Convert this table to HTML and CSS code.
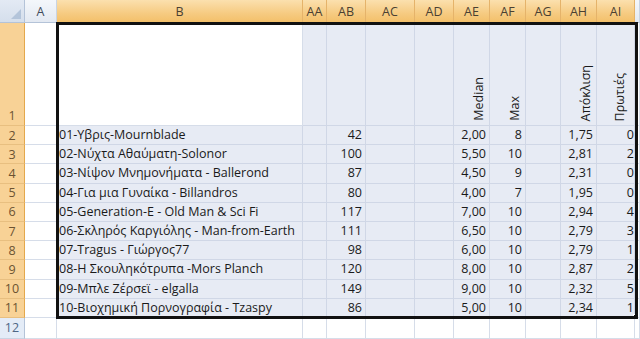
FILE: index.html
```html
<!DOCTYPE html>
<html>
<head>
<meta charset="utf-8">
<link rel="stylesheet" href="styles.css">
</head>
<body>
<div class="sheet">
  <div class="corner"></div>
  <div class="ch">A</div>
  <div class="ch on">B</div>
  <div class="ch on">AA</div>
  <div class="ch on">AB</div>
  <div class="ch on">AC</div>
  <div class="ch on">AD</div>
  <div class="ch on">AE</div>
  <div class="ch on">AF</div>
  <div class="ch on">AG</div>
  <div class="ch on">AH</div>
  <div class="ch on">AI</div>
  <div class="ch"></div>

  <div class="rh on tall">1</div>
  <div class="c"></div>
  <div class="c"></div>
  <div class="c sel"></div>
  <div class="c sel"></div>
  <div class="c sel"></div>
  <div class="c sel"></div>
  <div class="c sel rot"><span>Median</span></div>
  <div class="c sel rot"><span>Max</span></div>
  <div class="c sel"></div>
  <div class="c sel rot"><span>Απόκλιση</span></div>
  <div class="c sel rot last"><span>Πρωτιές</span></div>
  <div class="c"></div>

  <div class="rh on">2</div><div class="c"></div><div class="c sel t">01-Υβρις-Mournblade</div><div class="c sel"></div><div class="c sel n">42</div><div class="c sel"></div><div class="c sel"></div><div class="c sel n">2,00</div><div class="c sel n">8</div><div class="c sel"></div><div class="c sel n">1,75</div><div class="c sel n edge">0</div><div class="c"></div>
  <div class="rh on">3</div><div class="c"></div><div class="c sel t">02-Νύχτα Αθαύματη-Solonor</div><div class="c sel"></div><div class="c sel n">100</div><div class="c sel"></div><div class="c sel"></div><div class="c sel n">5,50</div><div class="c sel n">10</div><div class="c sel"></div><div class="c sel n">2,81</div><div class="c sel n edge">2</div><div class="c"></div>
  <div class="rh on">4</div><div class="c"></div><div class="c sel t">03-Νίψον Μνημονήματα - Ballerond</div><div class="c sel"></div><div class="c sel n">87</div><div class="c sel"></div><div class="c sel"></div><div class="c sel n">4,50</div><div class="c sel n">9</div><div class="c sel"></div><div class="c sel n">2,31</div><div class="c sel n edge">0</div><div class="c"></div>
  <div class="rh on">5</div><div class="c"></div><div class="c sel t">04-Για μια Γυναίκα - Billandros</div><div class="c sel"></div><div class="c sel n">80</div><div class="c sel"></div><div class="c sel"></div><div class="c sel n">4,00</div><div class="c sel n">7</div><div class="c sel"></div><div class="c sel n">1,95</div><div class="c sel n edge">0</div><div class="c"></div>
  <div class="rh on">6</div><div class="c"></div><div class="c sel t">05-Generation-E - Old Man &amp; Sci Fi</div><div class="c sel"></div><div class="c sel n">117</div><div class="c sel"></div><div class="c sel"></div><div class="c sel n">7,00</div><div class="c sel n">10</div><div class="c sel"></div><div class="c sel n">2,94</div><div class="c sel n edge">4</div><div class="c"></div>
  <div class="rh on">7</div><div class="c"></div><div class="c sel t">06-Σκληρός Καργιόλης - Man-from-Earth</div><div class="c sel"></div><div class="c sel n">111</div><div class="c sel"></div><div class="c sel"></div><div class="c sel n">6,50</div><div class="c sel n">10</div><div class="c sel"></div><div class="c sel n">2,79</div><div class="c sel n edge">3</div><div class="c"></div>
  <div class="rh on">8</div><div class="c"></div><div class="c sel t">07-Tragus - Γιώργος77</div><div class="c sel"></div><div class="c sel n">98</div><div class="c sel"></div><div class="c sel"></div><div class="c sel n">6,00</div><div class="c sel n">10</div><div class="c sel"></div><div class="c sel n">2,79</div><div class="c sel n edge">1</div><div class="c"></div>
  <div class="rh on">9</div><div class="c"></div><div class="c sel t">08-Η Σκουληκότρυπα -Mors Planch</div><div class="c sel"></div><div class="c sel n">120</div><div class="c sel"></div><div class="c sel"></div><div class="c sel n">8,00</div><div class="c sel n">10</div><div class="c sel"></div><div class="c sel n">2,87</div><div class="c sel n edge">2</div><div class="c"></div>
  <div class="rh on">10</div><div class="c"></div><div class="c sel t">09-Μπλε Ζέρσεϊ - elgalla</div><div class="c sel"></div><div class="c sel n">149</div><div class="c sel"></div><div class="c sel"></div><div class="c sel n">9,00</div><div class="c sel n">10</div><div class="c sel"></div><div class="c sel n">2,32</div><div class="c sel n edge">5</div><div class="c"></div>
  <div class="rh on">11</div><div class="c"></div><div class="c sel t">10-Βιοχημική Πορνογραφία - Tzaspy</div><div class="c sel"></div><div class="c sel n">86</div><div class="c sel"></div><div class="c sel"></div><div class="c sel n">5,00</div><div class="c sel n">10</div><div class="c sel"></div><div class="c sel n">2,34</div><div class="c sel n edge">1</div><div class="c"></div>

  <div class="rh">12</div><div class="c"></div><div class="c"></div><div class="c"></div><div class="c"></div><div class="c"></div><div class="c"></div><div class="c"></div><div class="c"></div><div class="c"></div><div class="c"></div><div class="c"></div><div class="c"></div>

  <div class="selection"><div class="handle"></div></div>
</div>
</body>
</html>
```

FILE: styles.css
```css
html, body {
  margin: 0;
  padding: 0;
  background: #ffffff;
}

.sheet {
  position: relative;
  width: 640px;
  height: 339px;
  overflow: hidden;
  display: grid;
  grid-template-columns: 25px 32px 246px 24px 39px 49px 39px 36px 36px 35px 36px 38px 5px;
  grid-template-rows: 23px 103px repeat(10, 19.2px) 1fr;
  font-family: "Open Sans", "Noto Sans", sans-serif;
  font-size: 12.5px;
  color: #1a1a1a;
}

.sheet > div {
  box-sizing: border-box;
  min-width: 0;
  overflow: hidden;
  white-space: nowrap;
}

.corner {
  position: relative;
  background: linear-gradient(#e3eaf4, #d5dfec);
  border-right: 1px solid #b4c3d8;
  border-bottom: 1px solid #b4c3d8;
}

.corner::after {
  content: "";
  position: absolute;
  right: 3px;
  bottom: 3px;
  width: 0;
  height: 0;
  border-left: 10px solid transparent;
  border-bottom: 10px solid #b3c4da;
}

.ch {
  display: flex;
  align-items: center;
  justify-content: center;
  background: linear-gradient(#f4f7fb, #e3e9f2);
  border-right: 1px solid #c9d4e3;
  border-bottom: 1px solid #b4c3d8;
  color: #3f4b5b;
  font-size: 12.5px;
  padding-top: 1px;
}

.ch.on {
  background: linear-gradient(#fbe0ae, #f6cb82 60%, #f3c06a);
  border-right: 1px solid #e5b36a;
  border-bottom: 1px solid #e4a84c;
  color: #4a4032;
}

.rh {
  display: flex;
  align-items: center;
  justify-content: center;
  background: #e4ecf7;
  border-right: 1px solid #b4c3d8;
  border-bottom: 1px solid #c9d4e3;
  color: #4f6685;
  font-size: 12.5px;
}

.rh.on {
  background: #f8d296;
  border-right: 1px solid #e4a84c;
  border-bottom: 1px solid #e8bf80;
  color: #6b5231;
}

.rh.tall {
  align-items: flex-end;
  padding-bottom: 1px;
}

.c {
  background: #ffffff;
  border-right: 1px solid #d6dde9;
  border-bottom: 1px solid #d6dde9;
  line-height: 18px;
}

.c.sel {
  background: #e7ebf4;
  border-right-color: #d0d7e6;
  border-bottom-color: #d0d7e6;
}

.t {
  padding-left: 2px;
}

.n {
  text-align: right;
  padding-right: 3px;
}

.n.edge {
  padding-right: 0;
}

.rot {
  display: flex;
  justify-content: flex-end;
  align-items: flex-end;
  padding: 0 2px 4px 0;
}

.rot.last {
  padding-right: 6px;
}

.rot span {
  writing-mode: vertical-rl;
  transform: rotate(180deg);
  line-height: 16px;
}

.selection {
  position: absolute;
  left: 56px;
  top: 22px;
  width: 582px;
  height: 297px;
  border: 3px solid #111111;
  box-sizing: border-box;
}

.handle {
  position: absolute;
  right: -5px;
  bottom: -5px;
  width: 5px;
  height: 5px;
  background: #111111;
  border: 1px solid #ffffff;
}
```
